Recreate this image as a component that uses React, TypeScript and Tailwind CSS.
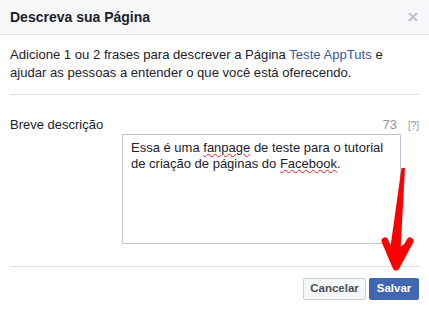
import React from "react";

export default function App() {
  const font = { fontFamily: '"Liberation Sans", Arial, sans-serif' };
  const squiggle = "underline decoration-wavy decoration-[#e02020] decoration-1 underline-offset-[1px]";
  return (
    <div className="w-[429px] h-[312px] bg-white overflow-hidden relative text-[#1d2129]" style={font}>
      <div className="h-[35px] flex items-center justify-between pl-[10px] pr-[11px] bg-[#f6f7f9] border-b border-[#e5e5e5]">
        <span className="text-[14px] font-bold text-[#1d2129]">Descreva sua Página</span>
        <svg width="10" height="10" viewBox="0 0 10 10">
          <path d="M1 1L9 9M9 1L1 9" stroke="#bec2c9" strokeWidth="2.2" />
        </svg>
      </div>
      <div className="px-[10px] ">
        <div className="pt-[11px] pb-[12px] border-b border-[#dddfe2] text-[13.1px] leading-[18px] text-[#1d2129]">
          Adicione 1 ou 2 frases para descrever a Página <span className="text-[#365899]">Teste AppTuts</span> e
          ajudar as pessoas a entender o que você está oferecendo.
        </div>
        <div className="pt-[22px] pb-[22px] border-b border-[#dddfe2]">
          <div className="flex justify-between items-center h-[16px]">
            <span className="text-[13px] text-[#1d2129]">Breve descrição</span>
            <div className="flex items-center">
              <span className="text-[13px] text-[#90949c]">73</span>
              <span className="text-[10px] text-[#90949c] ml-[11px]">[?]</span>
            </div>
          </div>
          <div className="ml-[112px] mt-[1px] w-[279px] h-[110px] border border-[#bdc7d8] pt-[5px] px-[8px] text-[13px] leading-[16px] text-[#1d2129]">
            Essa é uma <span className={squiggle}>fanpage</span> de teste para o tutorial de criação de páginas do{" "}
            <span className={squiggle}>Facebook</span>.
          </div>
        </div>
        <div className="flex justify-end gap-[3px] pt-[11px]">
          <button className="h-[22px] w-[63px] border border-[#ced0d4] bg-[#f6f7f9] rounded-[2px] text-[11.5px] font-bold text-[#4b4f56] flex items-center justify-center">
            Cancelar
          </button>
          <button className="h-[22px] w-[50px] border border-[#4267b2] bg-[#4267b2] rounded-[2px] text-[11.5px] font-bold text-white flex items-center justify-center">
            Salvar
          </button>
        </div>
      </div>
      <svg className="absolute left-0 top-0" width="429" height="312" viewBox="0 0 429 312">
        <polygon points="401.5,168 405,168 400.5,250 390,250" fill="#ff0000" />
        <path d="M385 241 L396 267 L410 241" stroke="#ff0000" strokeWidth="7" strokeLinecap="round" strokeLinejoin="round" fill="none" />
        <polygon points="385,241 396,267 410,241 396,249" fill="#ff0000" />
      </svg>
    </div>
  );
}
